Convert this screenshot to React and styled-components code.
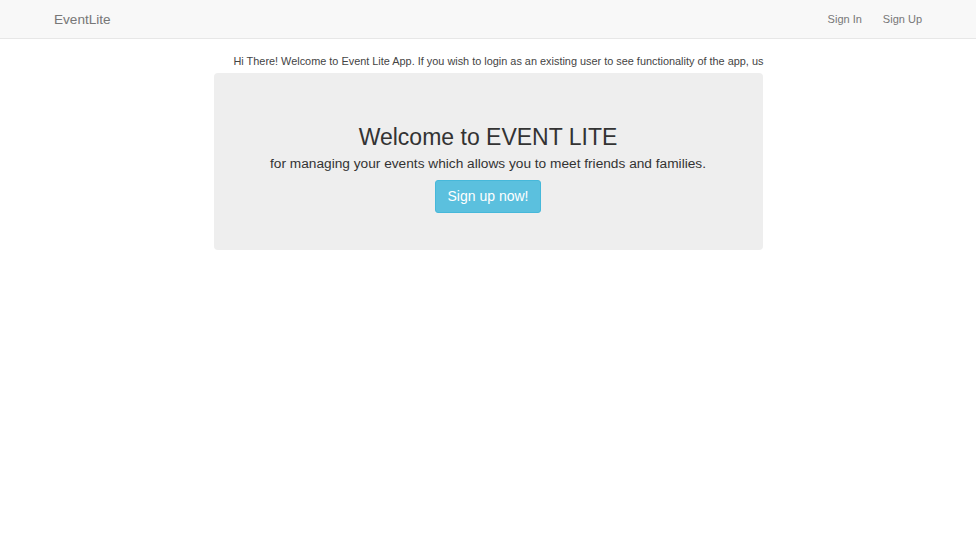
import React from 'react'
import styled, { createGlobalStyle } from 'styled-components'

const GlobalStyle = createGlobalStyle`
  body {
    margin: 0;
    background: #fff;
    font-family: "Liberation Sans", Arial, sans-serif;
    color: #333;
  }
`

const Navbar = styled.nav`
  height: 38px;
  background-color: #f8f8f8;
  border-bottom: 1px solid #e7e7e7;
  display: flex;
  align-items: center;
  justify-content: space-between;
  padding: 0 54px;
`

const Brand = styled.a`
  font-size: 13.6px;
  color: #777;
  text-decoration: none;
`

const NavLinks = styled.div`
  display: flex;
  gap: 21px;
`

const NavLink = styled.a`
  font-size: 11px;
  color: #777;
  text-decoration: none;
`

const Container = styled.main`
  width: 549px;
  margin: 0 auto;
`

const Notice = styled.div`
  height: 34px;
  box-sizing: border-box;
  display: flex;
  align-items: flex-end;
  padding: 0 0 5px 20px;
  white-space: nowrap;
  font-size: 10.9px;
  line-height: 13px;
  color: #444;
`

const Jumbotron = styled.section`
  background-color: #eee;
  border-radius: 4px;
  padding: 51px 20px 37px;
  display: flex;
  flex-direction: column;
  align-items: center;
  text-align: center;
`

const Heading = styled.h1`
  margin: 0;
  font-size: 23px;
  font-weight: 400;
  line-height: 26px;
  color: #333;
`

const Lead = styled.p`
  margin: 4px 0 6px;
  font-size: 13.7px;
  line-height: 20px;
  color: #333;
`

const Button = styled.a`
  display: inline-block;
  box-sizing: border-box;
  height: 33px;
  padding: 0 12px;
  line-height: 31px;
  font-size: 14px;
  color: #fff;
  background-color: #5bc0de;
  border: 1px solid #46b8da;
  border-radius: 3px;
  text-decoration: none;
`

const App = () => {
  return (
    <>
      <GlobalStyle />
      <Navbar>
        <Brand href="#">EventLite</Brand>
        <NavLinks>
          <NavLink href="#">Sign In</NavLink>
          <NavLink href="#">Sign Up</NavLink>
        </NavLinks>
      </Navbar>
      <Container>
        <Notice>
          Hi There! Welcome to Event Lite App. If you wish to login as an existing user to see functionality of the app, us
        </Notice>
        <Jumbotron>
          <Heading>Welcome to EVENT LITE</Heading>
          <Lead>for managing your events which allows you to meet friends and families.</Lead>
          <Button href="#">Sign up now!</Button>
        </Jumbotron>
      </Container>
    </>
  )
}

export default App
